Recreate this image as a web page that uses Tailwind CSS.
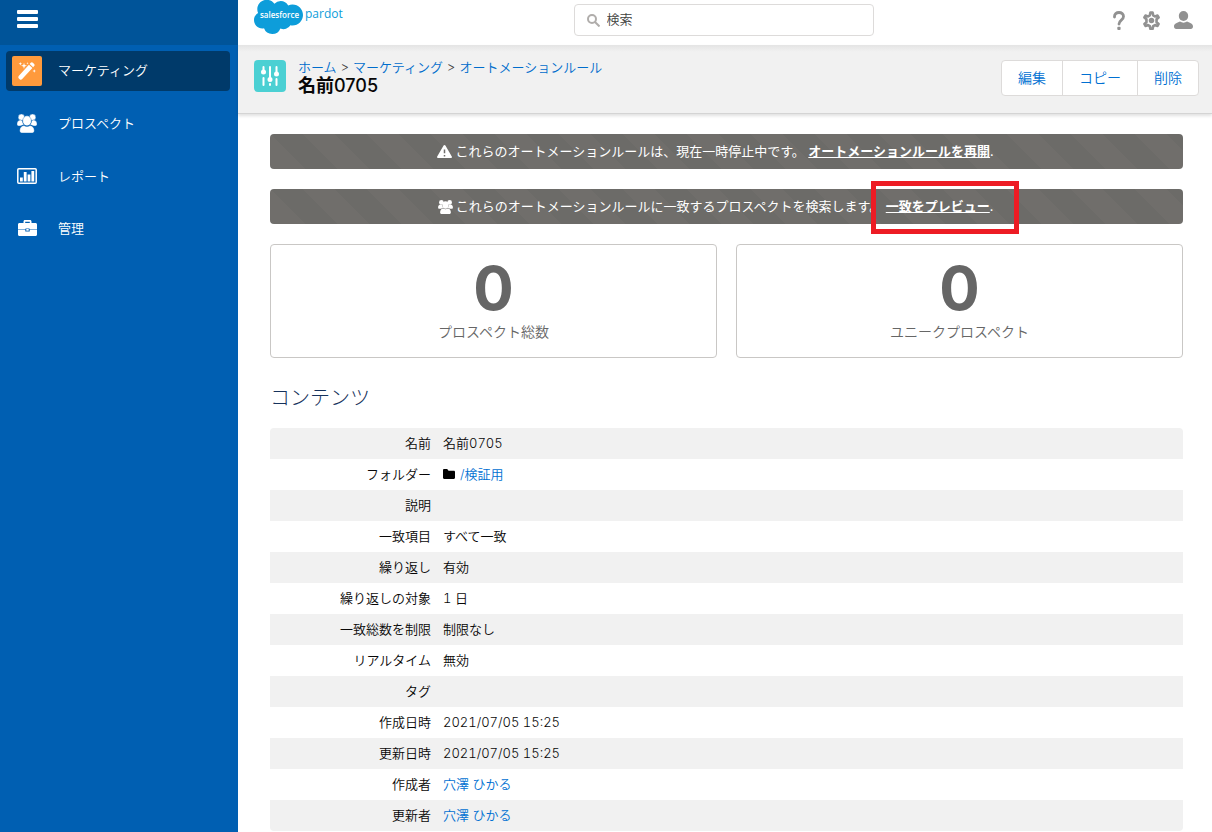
<!DOCTYPE html>
<html lang="ja">
<head>
<meta charset="utf-8">
<meta name="viewport" content="width=device-width, initial-scale=1">
<title>名前0705 - オートメーションルール</title>
<script src="https://cdn.jsdelivr.net/npm/@tailwindcss/browser@4"></script>
</head>
<body class="flex min-h-screen bg-white font-['Inter','Noto_Sans_CJK_JP',sans-serif] text-[13px] leading-5 font-[350] text-[#080707] tabular-nums">
<svg class="hidden" aria-hidden="true">
  <symbol id="people" viewBox="0 0 20 19">
    <ellipse cx="4.400" cy="3.300" rx="3.200" ry="3.300"/><ellipse cx="15.600" cy="3.300" rx="3.200" ry="3.300"/>
    <path d="M0 9.500C0 7.400 1.600 6 3.600 6c1 0 1.600.6 1.900 1.400.3 1.500.9 2.600 1.500 3.400-1.800.4-3.200 1.200-3.800 1.200H1.600C.6 12 0 11.400 0 10.600zM20 9.500C20 7.400 18.400 6 16.400 6c-1 0-1.600.6-1.900 1.400-.3 1.500-.9 2.600-1.500 3.400 1.800.4 3.200 1.200 3.800 1.200h1.600c1 0 1.600-.6 1.600-1.400z"/>
    <ellipse cx="10" cy="6.800" rx="4.300" ry="5"/>
    <path d="M2.700 16.500c0-3 2-4.700 4.300-5 1.800 1.300 4.200 1.300 6 0 2.300.3 4.300 2 4.300 5 0 1.500-.8 2.500-2 2.500H4.700c-1.200 0-2-1-2-2.500z"/>
  </symbol>
</svg>

<aside class="w-[238px] shrink-0 bg-[#005fb2] text-white">
  <div class="flex h-[45px] items-start bg-[#005499] px-[17px] pt-[10px]">
    <button type="button" aria-label="メニュー" class="flex h-[18px] w-[21px] flex-col justify-between">
      <span class="h-1 w-full rounded-[1px] bg-white"></span><span class="h-1 w-full rounded-[1px] bg-white"></span><span class="h-1 w-full rounded-[1px] bg-white"></span>
    </button>
  </div>
  <nav class="flex flex-col gap-[13px] pt-[6px] pr-2 pl-[6px]">
    <a href="#" aria-current="page" class="flex h-10 items-center gap-4 rounded bg-[#003a6a] pl-[6px]">
      <span class="flex size-[30px] items-center justify-center rounded-[2px] bg-[#ff9a3c]">
        <svg class="size-[18px] fill-white" viewBox="0 0 18 18"><path d="M.7 13.900 10.900 2.700l3.500 3.300L4.200 17.100c-.7.8-1.800.8-2.500.1l-.8-.8c-.7-.7-.8-1.700-.2-2.500z"/><path d="m11.700 1.900 1-1.100c.7-.7 1.500-.7 2.200 0l1.200 1.100c.7.700.7 1.500 0 2.200l-.9 1.100z"/><path d="m6 .8.7 2.200L9 3.800l-2.300.8L6 6.900l-.7-2.300L3 3.800l2.300-.8zM2.300 0l.5 1.200 1.300.5-1.300.5-.5 1.200-.4-1.200L.6 1.700l1.300-.5zM9.500 0l.3.900.9.300-.9.400-.3.900-.3-.9-.9-.4.900-.3zM16.200 7.300l.5 1.300 1.200.4-1.200.4-.5 1.300-.4-1.300-1.300-.4 1.300-.4z"/></svg>
      </span>
      <span class="pb-0.5">マーケティング</span>
    </a>
    <a href="#" class="flex h-10 items-center gap-4 pb-0.5 pl-[6px]">
      <span class="flex w-[30px] justify-center"><svg class="h-[19px] w-5 fill-white stroke-[#005fb2] stroke-[0.4]"><use href="#people"/></svg></span>
      <span>プロスペクト</span>
    </a>
    <a href="#" class="flex h-10 items-center gap-4 pb-0.5 pl-[6px]">
      <span class="flex w-[30px] justify-center"><svg class="h-4 w-5 fill-white" viewBox="0 0 20 16"><rect x="0.800" y="0.800" width="18.400" height="14.400" rx="1" fill="none" stroke="white" stroke-width="1.500"/><path d="M3 9.500h2.800V13.500H3zM6.800 4h2.800v9.500H6.800zM10.600 6.500h2.800v7H10.600zM14.400 3h2.800v10.500h-2.800z"/></svg></span>
      <span>レポート</span>
    </a>
    <a href="#" class="flex h-10 items-center gap-4 pb-1 pl-[6px]">
      <span class="flex w-[30px] justify-center"><svg class="h-4 w-[19px] fill-white" viewBox="0 0 19 16"><path d="M5.500 3V1.500C5.500.6 6.100 0 7 0h5c.9 0 1.500.6 1.500 1.500V3h4c.9 0 1.500.6 1.500 1.500V9h-7.500v-.6h-4V9H0V4.500C0 3.600.6 3 1.500 3zm1.700 0h4.600V1.700H7.200z"/><path d="M0 9.500h7.300v2h4.400v-2H19v5c0 .9-.6 1.500-1.500 1.500h-16C.6 16 0 15.400 0 14.500z"/><path d="M8.300 9h2.400v1.700H8.300z"/></svg></span>
      <span>管理</span>
    </a>
  </nav>
</aside>

<div class="flex min-w-0 flex-1 flex-col">
  <header class="grid h-[45px] grid-cols-[1fr_300px_1fr] items-start pr-[19px] pl-4">
    <a href="#" aria-label="salesforce pardot" class="flex items-start gap-0.5 text-[#0d9dda]">
      <svg class="h-[34px] w-[49px]" viewBox="0 0 49 34"><path fill="#0d9dda" d="M20.400 3.700A8.700 8.700 0 0 1 26.700 1c3.200 0 6 1.800 7.500 4.400a10.400 10.400 0 0 1 4.300-.9C44.300 4.500 49 9.200 49 15s-4.700 10.500-10.500 10.500c-.7 0-1.400-.1-2.100-.2a7.700 7.700 0 0 1-10 3.100A8.800 8.800 0 0 1 18.200 34a8.800 8.800 0 0 1-8.200-5.700 8 8 0 0 1-1.700.2C3.700 28.500 0 24.700 0 20.100c0-3.100 1.600-5.800 4.100-7.200a9.300 9.300 0 0 1-.8-3.800C3.300 4 7.500-.2 12.700-.2c3.200 0 6 1.500 7.700 3.900z"/><text x="25.500" y="18" text-anchor="middle" fill="white" class="font-['Open_Sans',sans-serif] text-[8px] font-semibold">salesforce</text></svg>
      <span class="pt-1 font-['Open_Sans',sans-serif] text-[12px] font-normal">pardot</span>
    </a>
    <div class="mt-1 flex h-8 items-center gap-[7px] rounded border border-[#dddbda] px-3">
      <svg class="size-[13px] shrink-0 fill-none stroke-[#b0adab] stroke-2" viewBox="0 0 13 13"><circle cx="5" cy="5" r="4"/><path d="m8 8 4.500 4.500"/></svg>
      <input type="search" aria-label="検索" placeholder="検索" class="w-full bg-transparent pb-0.5 outline-none placeholder:text-[#3e3e3c]">
    </div>
    <div class="flex h-10 items-center justify-end gap-3 text-[#919191]">
      <button type="button" aria-label="ヘルプ" class="flex size-5 items-center justify-center"><svg class="h-[19px] w-3" viewBox="0 0 12 19"><path d="M1.500 6V5.400C1.500 3.200 3.300 1.500 6 1.500s4.500 1.700 4.500 3.900c0 3.900-4.500 3.500-4.500 7.700" fill="none" stroke="currentColor" stroke-width="2.800" stroke-linecap="round"/><rect x="4.300" y="15.700" width="3.300" height="3.300" rx="1" fill="currentColor"/></svg></button>
      <button type="button" aria-label="設定" class="flex size-5 items-center justify-center"><svg class="size-[19px]" viewBox="0 0 18 18" fill="none" stroke="currentColor"><path d="M8 1.500h2l.6 2.600 1.700 1 2.400-.8 1 1.800-1.900 1.700v2.800l1.900 1.700-1 1.800-2.400-.8-1.700 1-.6 2.600H8l-.6-2.600-1.700-1-2.400.8-1-1.800 1.900-1.700V7.800L2.300 6.100l1-1.800 2.400.8 1.700-1z" stroke-width="2.500" stroke-linejoin="round"/><circle cx="9" cy="9.100" r="2.600" fill="currentColor" stroke="none"/></svg></button>
      <button type="button" aria-label="プロフィール" class="flex size-5 items-center justify-center"><svg class="h-[18px] w-[19px] fill-current" viewBox="0 0 19 18"><ellipse cx="9.500" cy="5" rx="4.700" ry="5"/><path d="M0 15.500c0-2.600 2.800-3.900 6-5 2 1.500 5 1.500 7 0 3.200 1.100 6 2.400 6 5 0 1.500-.9 2.500-2.200 2.500H2.200C.9 18 0 17 0 15.500z"/></svg></button>
    </div>
  </header>

  <div class="flex h-[69px] items-start justify-between border-b border-[#d4d4d4] bg-[#f1f1f1] bg-linear-to-b from-[#e4e4e4] from-0% to-[#f1f1f1] to-10% pr-[13px] pl-4 shadow-[0_2px_3px_rgba(0,0,0,0.12)]">
    <div class="flex gap-3">
      <span class="mt-[15px] flex size-8 items-center justify-center rounded bg-[#4bd0d3]">
        <svg class="h-5 w-[18px]" viewBox="0 0 18 20" stroke="white" fill="white" stroke-width="2" stroke-linecap="round"><path d="M2.500 1v4M2.500 12v7M9 1v12M9 18v1M15.500 1v6M15.500 13v6"/><circle cx="2.500" cy="6" r="1.500"/><circle cx="9" cy="13.500" r="1.500"/><circle cx="15.500" cy="8" r="1.500"/></svg>
      </span>
      <div class="pt-3">
        <nav aria-label="パンくず" class="flex gap-1 text-[#006dcc]"><a href="#">ホーム</a><span class="text-[#3e3e3c]">&gt;</span><a href="#">マーケティング</a><span class="text-[#3e3e3c]">&gt;</span><a href="#">オートメーションルール</a></nav>
        <h1 class="-mt-px text-[18px] leading-5 font-bold"><span>名前</span><span class="font-medium proportional-nums">0705</span></h1>
      </div>
    </div>
    <div class="mt-[15px] flex h-9 divide-x divide-[#dddbda] rounded border border-[#dddbda] bg-white text-[14px] text-[#0070d2]">
      <button type="button" class="px-4">編集</button>
      <button type="button" class="px-4">コピー</button>
      <button type="button" class="px-4">削除</button>
    </div>
  </div>

  <main class="pt-5 pr-[29px] pl-8">
    <div class="flex flex-col gap-5 text-white">
      <div class="flex h-[35px] items-center justify-center rounded bg-[#706e6b] bg-[linear-gradient(45deg,rgba(0,0,0,0.03)_25%,transparent_25%,transparent_50%,rgba(0,0,0,0.03)_50%,rgba(0,0,0,0.03)_75%,transparent_75%)] bg-size-[64px_64px] pr-[22px] font-normal">
        <svg class="mr-[3px] h-[13px] w-[15px]" viewBox="0 0 15 13"><path fill="white" d="M6.600.6a1 1 0 0 1 1.800 0l6.400 11c.4.700 0 1.400-.8 1.400H1c-.8 0-1.200-.7-.8-1.400z"/><path d="M7.500 4.500v3.800M7.500 10v1.500" stroke="#706e6b" stroke-width="1.500"/></svg>
        <p class="pb-0.5">これらのオートメーションルールは、現在一時停止中です。 <a href="#" class="font-bold underline">オートメーションルールを再開</a>.</p>
      </div>
      <div class="flex h-[35px] items-center justify-center rounded bg-[#706e6b] bg-[linear-gradient(45deg,rgba(0,0,0,0.03)_25%,transparent_25%,transparent_50%,rgba(0,0,0,0.03)_50%,rgba(0,0,0,0.03)_75%,transparent_75%)] bg-size-[64px_64px] pr-[22px] font-normal">
        <svg class="mr-[3px] h-[14px] w-[15px] fill-white"><use href="#people"/></svg>
        <p class="pb-0.5">これらのオートメーションルールに一致するプロスペクトを検索します。 <span class="relative inline-block"><a href="#" class="font-bold underline">一致をプレビュー</a><span class="pointer-events-none absolute -top-[15px] -right-[29px] -bottom-[18px] -left-[15px] border-[5px] border-[#ed1c24]"></span></span>.</p>
      </div>
    </div>

    <div class="mt-5 grid grid-cols-2 gap-[19px] text-center text-[#666]">
      <div class="h-[114px] rounded border border-[#c9c7c5] pt-[13px]"><div class="text-[60px] leading-[60px] font-bold proportional-nums">0</div><div class="mt-1 text-[14px]">プロスペクト総数</div></div>
      <div class="h-[114px] rounded border border-[#c9c7c5] pt-[13px]"><div class="text-[60px] leading-[60px] font-bold proportional-nums">0</div><div class="mt-1 text-[14px]">ユニークプロスペクト</div></div>
    </div>

    <h2 class="mt-[26px] text-[20px] leading-7 font-light text-[#16325c]">コンテンツ</h2>

    <table class="mt-4 w-full border-separate border-spacing-0 overflow-hidden rounded">
      <tbody class="[&_a]:text-[#0070d2] [&_td]:pb-0.5 [&_td]:pl-3 [&_th]:w-[161px] [&_th]:pb-0.5 [&_th]:text-right [&_th]:font-[350] [&_tr]:h-[31px] [&_tr:nth-child(odd)]:bg-[#f1f1f1]">
        <tr><th scope="row">名前</th><td>名前0705</td></tr>
        <tr><th scope="row">フォルダー</th><td><span class="flex items-center gap-[5px]"><svg class="h-[10px] w-3" viewBox="0 0 12 10"><path d="M0 1.200C0 .5.500 0 1.200 0h2.600c.4 0 .7.200.9.500l.8 1.200h5.300c.7 0 1.200.5 1.200 1.200v5.900c0 .7-.5 1.200-1.200 1.200H1.200C.5 10 0 9.500 0 8.800z"/></svg><a href="#">/検証用</a></span></td></tr>
        <tr><th scope="row">説明</th><td></td></tr>
        <tr><th scope="row">一致項目</th><td>すべて一致</td></tr>
        <tr><th scope="row">繰り返し</th><td>有効</td></tr>
        <tr><th scope="row">繰り返しの対象</th><td>1 日</td></tr>
        <tr><th scope="row">一致総数を制限</th><td>制限なし</td></tr>
        <tr><th scope="row">リアルタイム</th><td>無効</td></tr>
        <tr><th scope="row">タグ</th><td></td></tr>
        <tr><th scope="row">作成日時</th><td>2021/07/05 15:25</td></tr>
        <tr><th scope="row">更新日時</th><td>2021/07/05 15:25</td></tr>
        <tr><th scope="row">作成者</th><td><a href="#">穴澤 ひかる</a></td></tr>
        <tr><th scope="row">更新者</th><td><a href="#">穴澤 ひかる</a></td></tr>
      </tbody>
    </table>
  </main>
</div>
</body>
</html>
